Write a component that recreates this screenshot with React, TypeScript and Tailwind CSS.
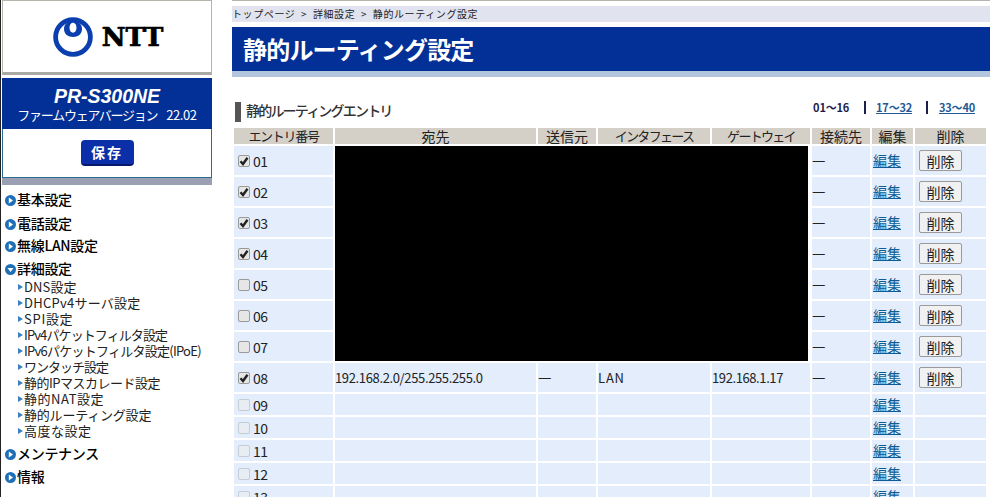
const font = { fontFamily: '"Noto Sans CJK JP", "Liberation Sans", sans-serif' };

const subMenu = [
  { label: 'DNS設定', track: 'tracking-[0.1px]' },
  { label: 'DHCPv4サーバ設定', track: 'tracking-[0.25px]' },
  { label: 'SPI設定', track: 'tracking-[0.7px]' },
  { label: 'IPv4パケットフィルタ設定', track: 'tracking-[-0.9px]' },
  { label: 'IPv6パケットフィルタ設定(IPoE)', track: 'tracking-[-0.75px]' },
  { label: 'ワンタッチ設定', track: 'tracking-[-1px]' },
  { label: '静的IPマスカレード設定', track: 'tracking-[-0.5px]' },
  { label: '静的NAT設定', track: 'tracking-[0.55px]' },
  { label: '静的ルーティング設定', track: 'tracking-[-0.2px]' },
  { label: '高度な設定', track: 'tracking-[0.5px]' },
];

function Bullet({ open }: { open?: boolean }) {
  return (
    <svg width="11" height="11" viewBox="0 0 11 11" className="shrink-0 mr-px">
      <circle cx="5.5" cy="5.5" r="5.5" fill="#1f6fb8" />
      <path d={open ? 'M2.5 4 H8.5 L5.5 8 Z' : 'M3.8 2.5 V8.5 L8 5.5 Z'} fill="#fff" />
    </svg>
  );
}

function MenuHead({ label, open, className }: { label: string; open?: boolean; className: string }) {
  return (
    <div className={`flex items-center pl-[3px] h-[20px] text-[14px] leading-[20px] font-medium text-black tracking-[-0.3px] ${className}`}>
      <Bullet open={open} />
      <span className="-mt-[2px]">{label}</span>
    </div>
  );
}

function Logo() {
  return (
    <div className="flex items-center gap-[9px] ml-[2px]">
      <svg width="40" height="40" viewBox="0 0 40 40">
        <circle cx="20" cy="20" r="17.4" fill="none" stroke="#0b3fb0" strokeWidth="4.8" />
        <path d="M20 4 C12.5 4 11 9 11 12 C11 17 15 20 20 20 C25 20 29 17 29 12 C29 9 27.5 4 20 4 Z" fill="#0b3fb0" />
        <ellipse cx="20" cy="10.8" rx="3.5" ry="5" fill="#fff" />
      </svg>
      <span className="text-[26px] leading-none font-bold text-black [-webkit-text-stroke:0.7px_black] [font-family:'DejaVu_Serif',serif]">NTT</span>
    </div>
  );
}

function Check({ on, faint }: { on?: boolean; faint?: boolean }) {
  return (
    <span className={`inline-flex w-[12px] h-[12px] rounded-[2px] border items-center justify-center shrink-0 ${faint ? 'border-[#c4ccd6] bg-[#e8edf3]' : 'border-[#9a9a9a] bg-[#e6e6e6]'}`}>
      {on && (
        <svg width="10" height="10" viewBox="0 0 10 10">
          <path d="M1.5 5.2 L4 8 L8.5 1.8" fill="none" stroke="#222" strokeWidth="2.4" />
        </svg>
      )}
    </span>
  );
}

function EntryCell({ no, on, faint }: { no: string; on?: boolean; faint?: boolean }) {
  return (
    <td className="bg-[#e3edfb] p-0 pl-[4px] align-middle">
      <div className="flex items-center gap-[3px] text-[14px] leading-[20px] text-[#222] tracking-[-0.5px]">
        <Check on={on} faint={faint} />
        {no}
      </div>
    </td>
  );
}

function EditLink() {
  return <a className="text-[14px] leading-[20px] text-[#0f5c94] underline pl-[1px]">編集</a>;
}

function DeleteBtn() {
  return (
    <button className="ml-[4px] w-[43px] h-[21px] border border-[#9a9a9a] rounded-[2px] bg-[#f1f1f1] text-[14px] text-[#222] leading-none block">
      削除
    </button>
  );
}

function Dash() {
  return <span className="text-[15px] leading-[20px]">—</span>;
}

const cell = 'bg-[#e3edfb] p-0 text-[13px] leading-[20px] text-[#222] align-middle';
const head = 'bg-[#d4d0c8] p-0 h-[16px] text-[14px] leading-[16px] font-normal text-[#222] text-center';

export default function App() {
  const blacked = ['02', '03', '04', '05', '06', '07'];
  const empty = ['09', '10', '11', '12', '13'];

  return (
    <div className="w-[990px] h-[497px] overflow-hidden bg-white flex" style={font}>
      <aside className="w-[232px] shrink-0 pl-px border-l border-l-[#222]">
        <div className="w-[210px] h-[75px] border-t border-x border-[#b5b5ad] border-b-[3px] border-b-[#a9aaa3] flex items-center justify-center">
          <Logo />
        </div>
        <div className="w-[210px] mt-[3px] bg-[#033096] h-[51px] flex flex-col items-center pt-[8px] text-white">
          <div className="text-[19.5px] leading-[20px] font-bold italic [font-family:'Liberation_Sans',sans-serif]">PR-S300NE</div>
          <div className="text-[13px] leading-[16px] mt-px whitespace-nowrap">
            <span className="tracking-[-1.25px]">ファームウェアバージョン</span>
            <span className="ml-[9px] tracking-[-0.4px]">22.02</span>
          </div>
        </div>
        <div className="w-[210px] h-[49px] border-x border-b border-[#2b6c8f] flex items-center justify-center">
          <button className="w-[53px] h-[26px] rounded-[4px] bg-[#0a2fa8] border-b-2 border-b-[#06196a] text-white text-[14px] font-bold tracking-[2px]">
            保存
          </button>
        </div>
        <div className="w-[210px] h-[7px] bg-[#9a9fb3]" />

        <MenuHead label="基本設定" className="mt-[5px]" />
        <MenuHead label="電話設定" className="mt-[4px]" />
        <MenuHead label="無線LAN設定" className="mt-[2px]" />
        <MenuHead label="詳細設定" open className="mt-[3px]" />
        <ul className="pl-[16px]">
          {subMenu.map((s) => (
            <li key={s.label} className={`h-[16px] flex items-center text-[13px] leading-[16px] text-[#222] whitespace-nowrap ${s.track}`}>
              <span className="w-0 h-0 border-y-[3px] border-y-transparent border-l-[5px] border-l-[#3a7fc0] mr-px" />
              {s.label}
            </li>
          ))}
        </ul>
        <MenuHead label="メンテナンス" className="mt-[5px]" />
        <MenuHead label="情報" className="mt-[3px]" />
      </aside>

      <main className="w-[758px] border-t border-t-[#b5b5ad]">
        <div className="mt-[5px] h-[16px] bg-[#e1e3ee] text-[10px] leading-[16px] text-[#222] tracking-[0.6px] whitespace-nowrap">
          トップページ &nbsp;&gt;&nbsp; 詳細設定 &nbsp;&gt;&nbsp; 静的ルーティング設定
        </div>
        <div className="mt-[5px] h-[44px] bg-[#033096] flex items-center pl-[11px] text-white text-[24px] font-bold tracking-[-0.8px]">
          静的ルーティング設定
        </div>
        <div className="h-[6px] bg-[#b4c6de]" />

        <div className="mt-[21px] h-[24px] flex items-start">
          <div className="ml-[3px] mt-[4px] w-[6px] h-[20px] bg-[#555]" />
          <h2 className="ml-[5px] mt-[2px] text-[14px] leading-[20px] font-medium text-[#333] tracking-[-1.8px]">静的ルーティングエントリ</h2>
          <div className="ml-auto mr-[15px] mt-px flex items-center text-[11px] font-bold leading-[16px] tracking-[-0.2px]">
            <span className="text-[#1d1d4d]">01〜16</span>
            <span className="ml-[15px] w-[2px] h-[13px] bg-[#1d1d4d]" />
            <a className="ml-[10px] text-[#1f5a94] underline">17〜32</a>
            <span className="ml-[14px] w-[2px] h-[13px] bg-[#1d1d4d]" />
            <a className="ml-[11px] text-[#1f5a94] underline">33〜40</a>
          </div>
        </div>

        <table className="mt-[4px] border-separate border-spacing-[2px] table-fixed w-[756px]">
          <colgroup>
            <col className="w-[99px]" />
            <col className="w-[201px]" />
            <col className="w-[58px]" />
            <col className="w-[112px]" />
            <col className="w-[98px]" />
            <col className="w-[58px]" />
            <col className="w-[41px]" />
            <col className="w-[71px]" />
          </colgroup>
          <thead>
            <tr>
              <th className={head}><span className="block text-[13px] leading-[16px] tracking-[-1.3px]">エントリ番号</span></th>
              <th className={head}>宛先</th>
              <th className={head}>送信元</th>
              <th className={head}><span className="block text-[13px] leading-[16px] tracking-[-1.7px]">インタフェース</span></th>
              <th className={head}><span className="block text-[13px] leading-[16px] tracking-[-1.7px]">ゲートウェイ</span></th>
              <th className={head}>接続先</th>
              <th className={head}>編集</th>
              <th className={head}>削除</th>
            </tr>
          </thead>
          <tbody>
            <tr className="h-[29px]">
              <EntryCell no="01" on />
              <td colSpan={4} rowSpan={7} className="bg-black p-0 border-r-2 border-r-white" />
              <td className={cell}><Dash /></td>
              <td className={cell}><EditLink /></td>
              <td className={cell}><DeleteBtn /></td>
            </tr>
            {blacked.map((no, i) => (
              <tr key={no} className="h-[29px]">
                <EntryCell no={no} on={i < 3} />
                <td className={cell}><Dash /></td>
                <td className={cell}><EditLink /></td>
                <td className={cell}><DeleteBtn /></td>
              </tr>
            ))}
            <tr className="h-[29px]">
              <EntryCell no="08" on />
              <td className={`${cell} tracking-[-0.36px]`}>192.168.2.0/255.255.255.0</td>
              <td className={cell}><Dash /></td>
              <td className={`${cell} tracking-[0.8px]`}>LAN</td>
              <td className={`${cell} tracking-[-0.4px]`}>192.168.1.17</td>
              <td className={cell}><Dash /></td>
              <td className={cell}><EditLink /></td>
              <td className={cell}><DeleteBtn /></td>
            </tr>
            {empty.map((no) => (
              <tr key={no} className="h-[21px]">
                <EntryCell no={no} faint />
                <td className={cell} />
                <td className={cell} />
                <td className={cell} />
                <td className={cell} />
                <td className={cell} />
                <td className={cell}><EditLink /></td>
                <td className={cell} />
              </tr>
            ))}
          </tbody>
        </table>
      </main>
    </div>
  );
}
